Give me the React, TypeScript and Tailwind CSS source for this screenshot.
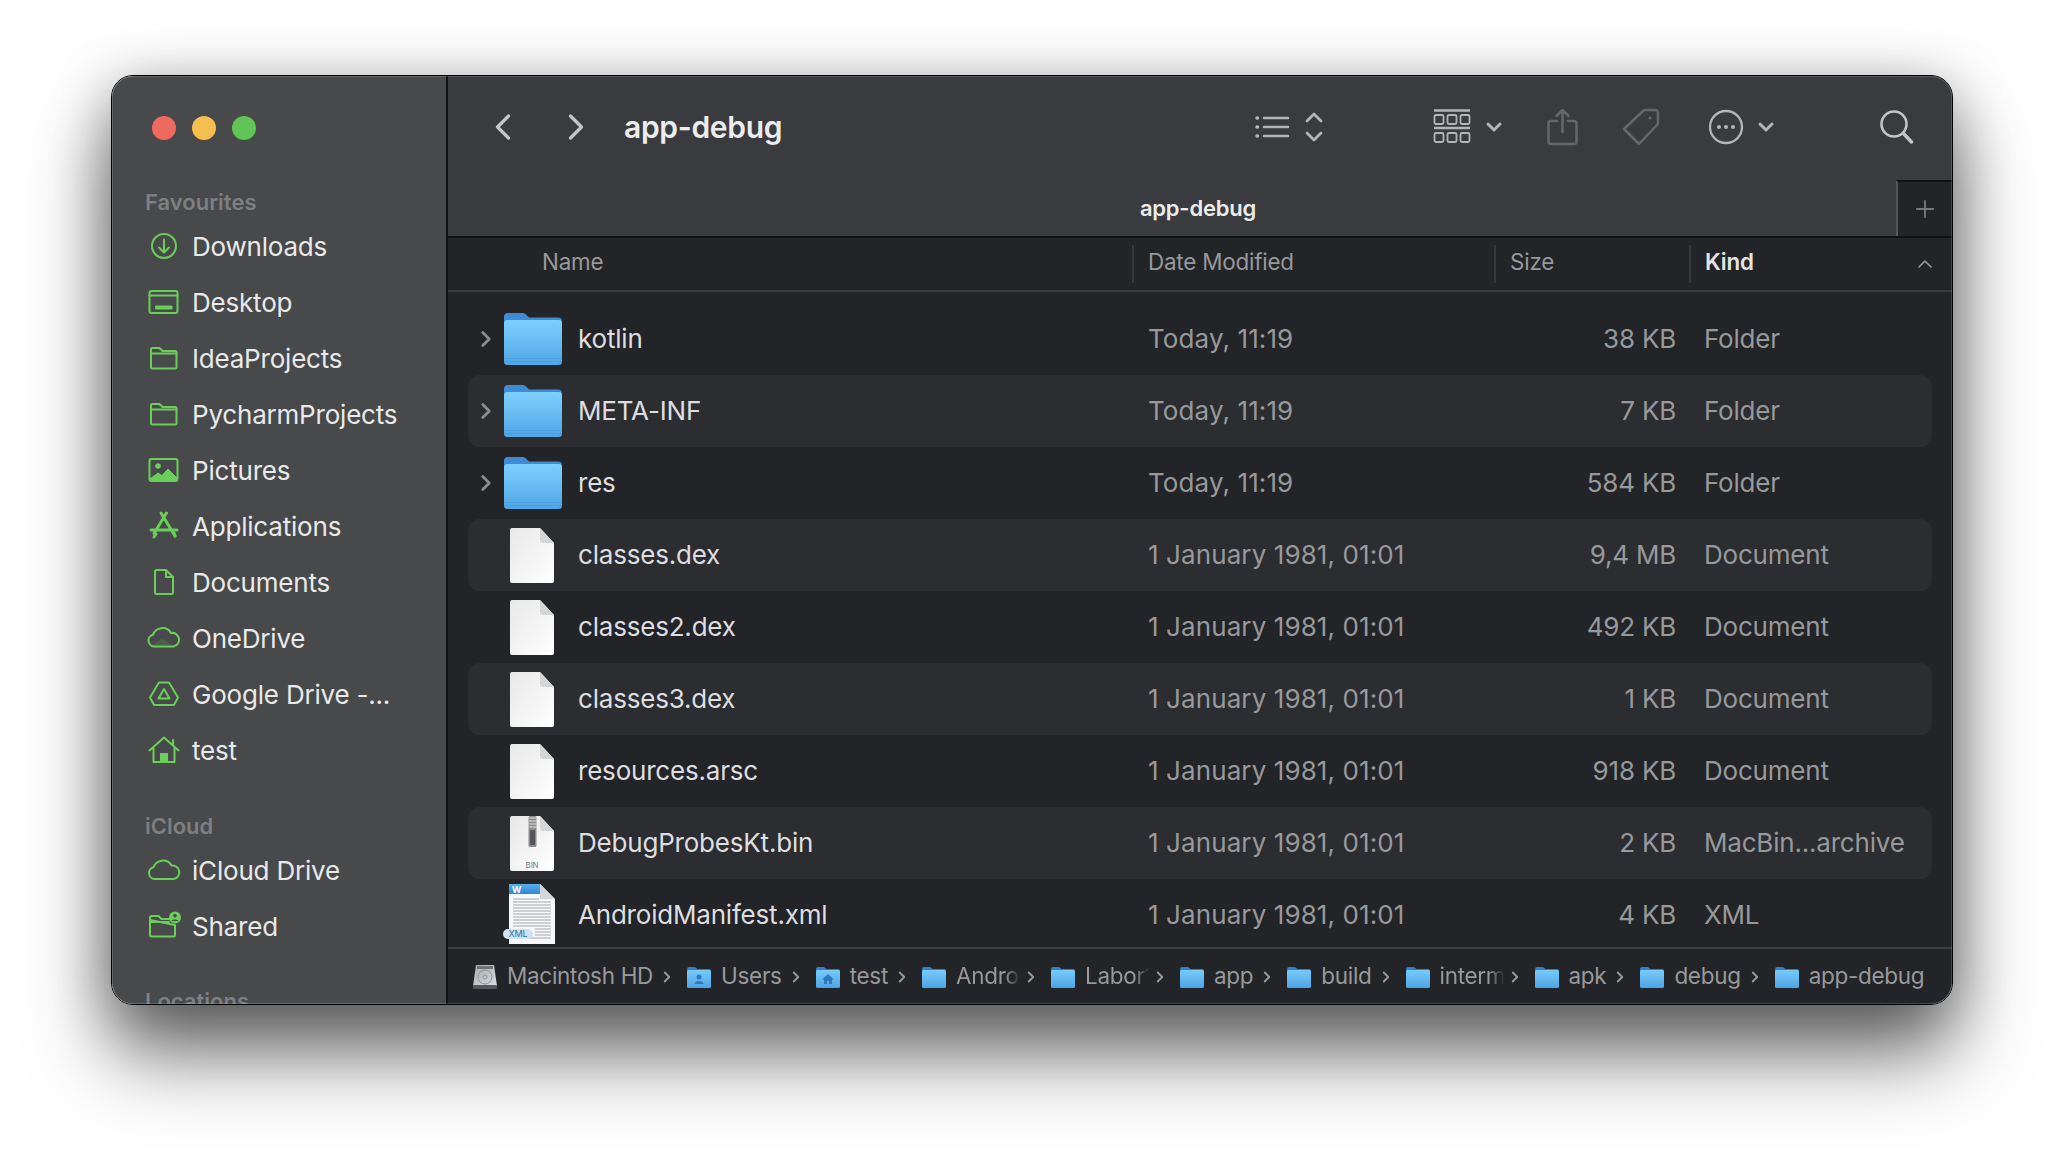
import type { ReactNode } from 'react';
import { ChevronLeft, ChevronRight, ChevronDown, ChevronUp, Plus } from 'lucide-react';

const GREEN = '#69cf59';

// sidebar glyphs, all drawn in a 36x36 box
const Glyph = ({ children }: { children: ReactNode }) => (
  <svg width="36" height="36" viewBox="0 0 36 36" fill="none" stroke={GREEN} strokeWidth="2" strokeLinecap="round" strokeLinejoin="round">
    {children}
  </svg>
);

const sideIcons: Record<string, ReactNode> = {
  downloads: (
    <Glyph>
      <circle cx="18" cy="18" r="12" />
      <path d="M18 11.500v12.500M13 19.500l5 5 5-5" />
    </Glyph>
  ),
  desktop: (
    <Glyph>
      <rect x="3.500" y="7" width="28" height="22" rx="2" />
      <path d="M3.500 11.500h28" />
      <rect x="10" y="22" width="16" height="3" fill={GREEN} strokeWidth="1" />
    </Glyph>
  ),
  folder: (
    <Glyph>
      <path d="M5 12V9.500A1.500 1.500 0 0 1 6.500 8h7l3 3h12.500A1.500 1.500 0 0 1 30.500 12.500V27a1.500 1.500 0 0 1-1.500 1.500H6.500A1.500 1.500 0 0 1 5 27z" />
      <path d="M5 13.500h25.500" />
    </Glyph>
  ),
  pictures: (
    <Glyph>
      <rect x="3.500" y="7" width="28" height="22" rx="2" />
      <circle cx="12" cy="14" r="2.800" fill={GREEN} stroke="none" />
      <path d="M4 27l8-6 4 2.500 6-6.500 9 9v2.500H4z" fill={GREEN} strokeWidth="1" />
    </Glyph>
  ),
  applications: (
    <Glyph>
      <path d="M8 25.500L20.500 5M15 5l14 23M5 22h26" strokeWidth="3" />
      <path d="M8 29l2-3M28 25l1 3" strokeWidth="3" />
    </Glyph>
  ),
  documents: (
    <Glyph>
      <path d="M9 7.500A1.500 1.500 0 0 1 10.500 6H20l7 7v15.500a1.500 1.500 0 0 1-1.500 1.500h-15A1.500 1.500 0 0 1 9 28.500z" />
      <path d="M20 6v7h7" />
    </Glyph>
  ),
  onedrive: (
    <Glyph>
      <path d="M8 26.500a6 6 0 0 1-1-11.800A10 10 0 0 1 25 13a6.500 6.500 0 0 1 2.500 13.500z" />
      <path d="M6 25l10-6 10 6z" fill={GREEN} fillOpacity="0.18" stroke="none" />
    </Glyph>
  ),
  gdrive: (
    <Glyph>
      <path d="M13 6.500h10l9 15-4 7.500H8l-4-7.500z" />
      <path d="M18 13l5.500 9.500h-11z" />
    </Glyph>
  ),
  home: (
    <Glyph>
      <path d="M3.500 18.500L18 5.500l14.500 13M7.500 16v14h21V16M27 8v5" />
      <rect x="14" y="21" width="8" height="9" fill={GREEN} stroke="none" />
    </Glyph>
  ),
  cloud: (
    <Glyph>
      <path d="M8.500 27a6 6 0 0 1-1-11.800A10 10 0 0 1 25.500 13.500a6.500 6.500 0 0 1 2 13.500z" />
    </Glyph>
  ),
  shared: (
    <Glyph>
      <path d="M4 12V9.500A1.500 1.500 0 0 1 5.500 8h7l3 3H24M29 17v10a1.500 1.500 0 0 1-1.500 1.500h-22A1.500 1.500 0 0 1 4 27V12zM4 14h19" />
      <circle cx="29" cy="9.500" r="6" fill={GREEN} stroke="none" />
      <circle cx="29" cy="7.800" r="1.800" fill="#48494b" stroke="none" />
      <path d="M25.500 13c.8-2 6.200-2 7 0z" fill="#48494b" stroke="none" />
    </Glyph>
  ),
};

const favourites = [
  ['downloads', 'Downloads'],
  ['desktop', 'Desktop'],
  ['folder', 'IdeaProjects'],
  ['folder', 'PycharmProjects'],
  ['pictures', 'Pictures'],
  ['applications', 'Applications'],
  ['documents', 'Documents'],
  ['onedrive', 'OneDrive'],
  ['gdrive', 'Google Drive -...'],
  ['home', 'test'],
];

const SideItem = ({ icon, label }: { icon: string; label: string }) => (
  <div className="flex h-[56px] items-center">
    <div className="flex w-[48px] justify-center">{sideIcons[icon]}</div>
    <span className="ml-[4px] text-[26px] tracking-[-0.2px] text-[#e9e9ea]">{label}</span>
  </div>
);

const BigFolder = () => (
  <svg width="60" height="54" viewBox="0 0 60 54">
    <defs>
      <linearGradient id="bigFolder" x1="0" y1="0" x2="0" y2="1">
        <stop offset="0" stopColor="#7dd0fd" />
        <stop offset="1" stopColor="#50a6e6" />
      </linearGradient>
    </defs>
    <path d="M1 5a4 4 0 0 1 4-4h14c2 0 3 .5 4.500 2l2.500 2.500h29a4 4 0 0 1 4 4V20H1z" fill="#3f8cd6" />
    <rect x="1" y="8" width="58" height="45" rx="3.500" fill="url(#bigFolder)" />
    <rect x="1" y="46" width="58" height="1" fill="#3f8fd2" opacity="0.5" />
    <rect x="1" y="49" width="58" height="1" fill="#3f8fd2" opacity="0.5" />
  </svg>
);

const DocShape = ({ id }: { id: string }) => (
  <>
    <defs>
      <linearGradient id={id} x1="0" y1="0" x2="1" y2="1">
        <stop offset="0" stopColor="#e8e8e8" />
        <stop offset="1" stopColor="#ffffff" />
      </linearGradient>
    </defs>
    <path d="M0 3a2 2 0 0 1 2-2h28l14 15v38a2 2 0 0 1-2 2H2a2 2 0 0 1-2-2z" fill={`url(#${id})`} />
    <path d="M30 1v12a3 3 0 0 0 3 3h11z" fill="#d6d6d6" />
  </>
);

const DocIcon = ({ id }: { id: string }) => (
  <svg width="46" height="57" viewBox="0 0 46 57">
    <DocShape id={id} />
  </svg>
);

const BinIcon = () => (
  <svg width="46" height="57" viewBox="0 0 46 57">
    <DocShape id="binDoc" />
    <rect x="18.500" y="1" width="8" height="31" rx="1.500" fill="#8b8c8e" />
    <path d="M18.500 3h8M18.500 6h8M18.500 9h8M18.500 12h8" stroke="#e0e0e0" strokeWidth="1" />
    <rect x="20" y="15" width="5" height="15" rx="1" fill="#55565a" />
    <text x="22" y="53" textAnchor="middle" fontSize="8" fill="#77787a" fontFamily="Inter, sans-serif">BIN</text>
  </svg>
);

const XmlIcon = () => (
  <svg width="60" height="62" viewBox="0 0 60 62">
    <defs>
      <linearGradient id="xmlHead" x1="0" y1="0" x2="0" y2="1">
        <stop offset="0" stopColor="#57afee" />
        <stop offset="1" stopColor="#2f86d4" />
      </linearGradient>
    </defs>
    <path d="M6 0h31l15 15v45H6z" fill="#f7f8fa" />
    <path d="M6 0h31l9 10H6z" fill="url(#xmlHead)" />
    <path d="M37 0v15h15z" fill="#d3d6da" />
    <text x="9" y="8.500" fontSize="9" fontWeight="700" fill="#ffffff" fontFamily="Inter, sans-serif">W</text>
    <path d="M10 15h26M10 18h38M10 21h38M10 24h38M10 27h38M10 30h38M10 33h38M10 36h38M10 39h38M10 42h38M32 45h16M32 48h16M32 51h16M12 54h36" stroke="#a4a7ab" strokeWidth="1" />
    <rect x="0" y="45" width="30" height="10" rx="5" fill="#cfe3f2" />
    <text x="15" y="53" textAnchor="middle" fontSize="9" fill="#2f6ea5" fontFamily="Inter, sans-serif">XML</text>
  </svg>
);

type Row = { name: string; date: string; size: string; kind: string; icon: 'folder' | 'doc' | 'bin' | 'xml' };

const rows: Row[] = [
  { name: 'kotlin', date: 'Today, 11:19', size: '38 KB', kind: 'Folder', icon: 'folder' },
  { name: 'META-INF', date: 'Today, 11:19', size: '7 KB', kind: 'Folder', icon: 'folder' },
  { name: 'res', date: 'Today, 11:19', size: '584 KB', kind: 'Folder', icon: 'folder' },
  { name: 'classes.dex', date: '1 January 1981, 01:01', size: '9,4 MB', kind: 'Document', icon: 'doc' },
  { name: 'classes2.dex', date: '1 January 1981, 01:01', size: '492 KB', kind: 'Document', icon: 'doc' },
  { name: 'classes3.dex', date: '1 January 1981, 01:01', size: '1 KB', kind: 'Document', icon: 'doc' },
  { name: 'resources.arsc', date: '1 January 1981, 01:01', size: '918 KB', kind: 'Document', icon: 'doc' },
  { name: 'DebugProbesKt.bin', date: '1 January 1981, 01:01', size: '2 KB', kind: 'MacBin...archive', icon: 'bin' },
  { name: 'AndroidManifest.xml', date: '1 January 1981, 01:01', size: '4 KB', kind: 'XML', icon: 'xml' },
];

const FileRow = ({ row, index }: { row: Row; index: number }) => (
  <div className={`grid h-[72px] grid-cols-[664px_362px_195px_1fr] items-center rounded-[12px] text-[26px] tracking-[-0.2px] text-[#98999b] ${index % 2 === 1 ? 'bg-[#2c2d30]' : ''}`}>
    <div className="flex h-full items-center">
      <div className="flex w-[31px] justify-end">
        {row.icon === 'folder' && <ChevronRight size={26} strokeWidth={2.5} className="ml-1 text-[#8d8e90]" />}
      </div>
      <div className="mr-[12px] flex w-[67px] justify-center">
        {row.icon === 'folder' && <BigFolder />}
        {row.icon === 'doc' && <DocIcon id={`doc${index}`} />}
        {row.icon === 'bin' && <BinIcon />}
        {row.icon === 'xml' && <XmlIcon />}
      </div>
      <span className="pb-[2px] text-[#dedee0]">{row.name}</span>
    </div>
    <div className="pb-[2px] pl-[16px] tracking-[0.1px]">{row.date}</div>
    <div className="pb-[2px] pr-[13px] text-right">{row.size}</div>
    <div className="pb-[2px] pl-[15px]">{row.kind}</div>
  </div>
);

const HeaderCell = ({ label, bold, sep }: { label: string; bold?: boolean; sep?: boolean }) => (
  <div className={`flex h-[38px] items-center pb-[4px] ${sep ? 'border-l-2 border-[#37383a] pl-[14px]' : 'pl-[74px]'} ${bold ? 'font-semibold text-[#e4e4e5]' : 'text-[#98999b]'}`}>
    {label}
  </div>
);

const CrumbFolder = () => (
  <svg width="24" height="22" viewBox="0 0 24 22" className="shrink-0">
    <defs>
      <linearGradient id="crumbFolder" x1="0" y1="0" x2="0" y2="1">
        <stop offset="0" stopColor="#78cbfb" />
        <stop offset="1" stopColor="#4da3e4" />
      </linearGradient>
    </defs>
    <path d="M0 3a2 2 0 0 1 2-2h6l2.500 2H22a2 2 0 0 1 2 2v4H0z" fill="#2f7fc9" />
    <rect y="4" width="24" height="18" rx="1.500" fill="url(#crumbFolder)" />
  </svg>
);

const HomeBadge = ({ kind }: { kind: 'user' | 'home' }) => (
  <div className="relative shrink-0">
    <CrumbFolder />
    <svg width="12" height="12" viewBox="0 0 12 12" className="absolute left-[6px] top-[7px]" fill="#2f78bd">
      {kind === 'user' ? (
        <>
          <circle cx="6" cy="4" r="2.500" />
          <path d="M1.500 11c0-4 9-4 9 0z" />
        </>
      ) : (
        <path d="M6 1L0 6.500h2V11h3V8h2v3h3V6.500h2z" />
      )}
    </svg>
  </div>
);

const DiskIcon = () => (
  <svg width="24" height="25" viewBox="0 0 24 25" className="shrink-0">
    <defs>
      <linearGradient id="disk" x1="0" y1="0" x2="1" y2="1">
        <stop offset="0" stopColor="#a9abad" />
        <stop offset="1" stopColor="#d4dde2" />
      </linearGradient>
    </defs>
    <path d="M3 1h18l3 21H0z" fill="url(#disk)" />
    <rect x="4" y="2" width="16" height="3" fill="#707274" />
    <circle cx="12" cy="13" r="7" fill="none" stroke="#8d9194" strokeWidth="1" />
    <circle cx="12" cy="13" r="2" fill="none" stroke="#8d9194" strokeWidth="1" />
    <rect y="21" width="24" height="4" rx="1" fill="#55575a" />
  </svg>
);

// path bar: text blocks with fixed widths where Finder cuts the name short
const Crumb = ({ icon, label, clip }: { icon: ReactNode; label: string; clip?: string }) => (
  <div className="flex items-center">
    {icon}
    <span className={`ml-[10px] whitespace-nowrap pb-[2px] ${clip ?? ''}`}>{label}</span>
  </div>
);

const Sep = ({ tight }: { tight?: boolean }) => (
  <ChevronRight size={18} strokeWidth={2.5} className={`mr-[11px] shrink-0 text-[#98999b] ${tight ? 'ml-[1px]' : 'ml-[5px]'}`} />
);

const fade = 'w-[65px] overflow-hidden [mask-image:linear-gradient(to_right,black_75%,transparent)]';

export default function App() {
  return (
    <div className="min-h-[1152px] overflow-hidden bg-white pl-[111px] pt-[75px] font-['Inter',sans-serif]">
      <div className="relative flex h-[930px] w-[1842px] overflow-hidden rounded-[22px] border border-black shadow-[0_50px_80px_rgba(0,0,0,0.55),0_10px_60px_rgba(0,0,0,0.3)]">
        {/* Sidebar */}
        <aside className="flex w-[336px] shrink-0 flex-col overflow-hidden border-r-2 border-[#111] bg-[#48494b] pl-[28px]">
          <div className="flex shrink-0 gap-[16px] pl-[12px] pt-[40px]">
            <div className="h-[24px] w-[24px] rounded-full bg-[#ee6a5f]" />
            <div className="h-[24px] w-[24px] rounded-full bg-[#f4bf4f]" />
            <div className="h-[24px] w-[24px] rounded-full bg-[#60c554]" />
          </div>
          <div className="mt-[48px] shrink-0 pl-[5px] text-[22px] font-semibold leading-[28px] text-[#7e7f82]">Favourites</div>
          <div className="mt-[2px] shrink-0">
            {favourites.map(([icon, label]) => (
              <SideItem key={label} icon={icon} label={label} />
            ))}
          </div>
          <div className="mt-[34px] shrink-0 pl-[5px] text-[22px] font-semibold leading-[28px] text-[#7e7f82]">iCloud</div>
          <div className="mt-[2px] shrink-0">
            <SideItem icon="cloud" label="iCloud Drive" />
            <SideItem icon="shared" label="Shared" />
          </div>
          <div className="mt-[33px] shrink-0 pl-[5px] text-[22px] font-semibold leading-[28px] text-[#7e7f82]">Locations</div>
        </aside>

        {/* Main pane */}
        <main className="flex min-w-0 flex-1 flex-col bg-[#232427]">
          {/* Toolbar */}
          <div className="flex h-[104px] shrink-0 items-center bg-[#3a3b3e] pb-[2px] text-[#b4b5b7]">
            <ChevronLeft size={44} strokeWidth={1.8} className="ml-[33px] text-[#c4c5c6]" />
            <ChevronRight size={44} strokeWidth={1.8} className="ml-[29px] text-[#c4c5c6]" />
            <span className="ml-[26px] text-[30px] font-semibold tracking-[-0.3px] text-[#ececed]">app-debug</span>
            <svg width="36" height="24" viewBox="0 0 36 24" className="ml-[473px]" fill="none" stroke="currentColor" strokeWidth="2.500" strokeLinecap="round">
              <path d="M9 3h24M9 12h24M9 21h24" />
              <path d="M2 3h.5M2 12h.5M2 21h.5" strokeWidth="3.500" />
            </svg>
            <svg width="18" height="30" viewBox="0 0 18 30" className="ml-[14px]" fill="none" stroke="currentColor" strokeWidth="2.800" strokeLinecap="round" strokeLinejoin="round">
              <path d="M2 9l7-7 7 7M2 21l7 7 7-7" />
            </svg>
            <svg width="38" height="36" viewBox="0 0 38 36" className="ml-[110px]" fill="none" stroke="currentColor" strokeWidth="1.800">
              <path d="M1 1.500h36M1 19h36" strokeWidth="2.500" />
              <rect x="1.500" y="6" width="9" height="9" rx="1.500" />
              <rect x="14.500" y="6" width="9" height="9" rx="1.500" />
              <rect x="27.500" y="6" width="9" height="9" rx="1.500" />
              <rect x="1.500" y="24" width="9" height="9" rx="1.500" />
              <rect x="14.500" y="24" width="9" height="9" rx="1.500" />
              <rect x="27.500" y="24" width="9" height="9" rx="1.500" />
            </svg>
            <ChevronDown size={24} strokeWidth={3} className="ml-[11px]" />
            <svg width="31" height="38" viewBox="0 0 31 38" className="ml-[41px] text-[#66676a]" fill="none" stroke="currentColor" strokeWidth="2.500" strokeLinecap="round" strokeLinejoin="round">
              <path d="M10 13H4a2.500 2.500 0 0 0-2.500 2.500v18A2.500 2.500 0 0 0 4 36h23a2.500 2.500 0 0 0 2.500-2.500v-18A2.500 2.500 0 0 0 27 13h-6" />
              <path d="M15.500 24V2M9.500 8l6-6 6 6" />
            </svg>
            <svg width="38" height="38" viewBox="0 0 38 38" className="ml-[44px] text-[#66676a]" fill="none" stroke="currentColor" strokeWidth="2.500" strokeLinejoin="round">
              <path d="M23 2h10a3 3 0 0 1 3 3v10a3 3 0 0 1-1 2L17 36L2 21L21 3a3 3 0 0 1 2-1z" />
              <circle cx="28" cy="10" r="1.500" fill="currentColor" stroke="none" />
            </svg>
            <svg width="36" height="36" viewBox="0 0 36 36" className="ml-[48px]" fill="none" stroke="currentColor" strokeWidth="2.300">
              <circle cx="18" cy="18" r="16" />
              <circle cx="11" cy="18" r="2" fill="currentColor" stroke="none" />
              <circle cx="18" cy="18" r="2" fill="currentColor" stroke="none" />
              <circle cx="25" cy="18" r="2" fill="currentColor" stroke="none" />
            </svg>
            <ChevronDown size={24} strokeWidth={3} className="ml-[10px]" />
            <svg width="34" height="34" viewBox="0 0 34 34" className="ml-[102px] text-[#c4c5c6]" fill="none" stroke="currentColor" strokeWidth="2.600" strokeLinecap="round">
              <circle cx="14" cy="14" r="12.500" />
              <path d="M23.500 23.500l8 8.500" strokeWidth="3.400" />
            </svg>
          </div>

          {/* Tab bar */}
          <div className="flex h-[58px] shrink-0 border-b-2 border-[#111] bg-[#3a3b3e]">
            <div className="flex flex-1 items-center justify-center pl-[52px] text-[22px] font-semibold tracking-[-0.2px] text-[#ececed]">app-debug</div>
            <div className="flex w-[56px] items-center justify-center border-l-2 border-t-2 border-l-[#55565a] border-t-[#111] bg-[#232427]">
              <Plus size={28} strokeWidth={1.6} className="text-[#77787a]" />
            </div>
          </div>

          {/* Column headers */}
          <div className="grid h-[54px] shrink-0 grid-cols-[664px_362px_195px_1fr] items-center border-b-2 border-[#3a3b3d] pl-[20px] text-[22.400px] tracking-[-0.2px]">
            <HeaderCell label="Name" />
            <HeaderCell label="Date Modified" sep />
            <HeaderCell label="Size" sep />
            <div className="flex items-center justify-between pr-[15px]">
              <HeaderCell label="Kind" bold sep />
              <ChevronUp size={24} strokeWidth={1.6} className="text-[#98999b]" />
            </div>
          </div>

          {/* File list */}
          <div className="flex-1 overflow-hidden px-[20px] pt-[11px]">
            {rows.map((row, i) => (
              <FileRow key={row.name} row={row} index={i} />
            ))}
          </div>

          {/* Path bar */}
          <div className="flex h-[57px] shrink-0 items-center border-t-2 border-[#3d3e40] pl-[25px] text-[22.500px] tracking-[-0.3px] text-[#98999b]">
            <Crumb icon={<DiskIcon />} label="Macintosh HD" />
            <Sep />
            <Crumb icon={<HomeBadge kind="user" />} label="Users" />
            <Sep />
            <Crumb icon={<HomeBadge kind="home" />} label="test" />
            <Sep />
            <Crumb icon={<CrumbFolder />} label="Android" clip={fade} />
            <Sep tight />
            <Crumb icon={<CrumbFolder />} label="Labor1" clip={fade} />
            <Sep tight />
            <Crumb icon={<CrumbFolder />} label="app" />
            <Sep />
            <Crumb icon={<CrumbFolder />} label="build" />
            <Sep />
            <Crumb icon={<CrumbFolder />} label="intermediates" clip={fade} />
            <Sep tight />
            <Crumb icon={<CrumbFolder />} label="apk" />
            <Sep />
            <Crumb icon={<CrumbFolder />} label="debug" />
            <Sep />
            <Crumb icon={<CrumbFolder />} label="app-debug" />
          </div>
        </main>

        {/* light hairline just inside the window edge */}
        <div className="pointer-events-none absolute inset-0 rounded-[21px] shadow-[inset_0_0_0_1px_rgba(255,255,255,0.16)]" />
      </div>
    </div>
  );
}
